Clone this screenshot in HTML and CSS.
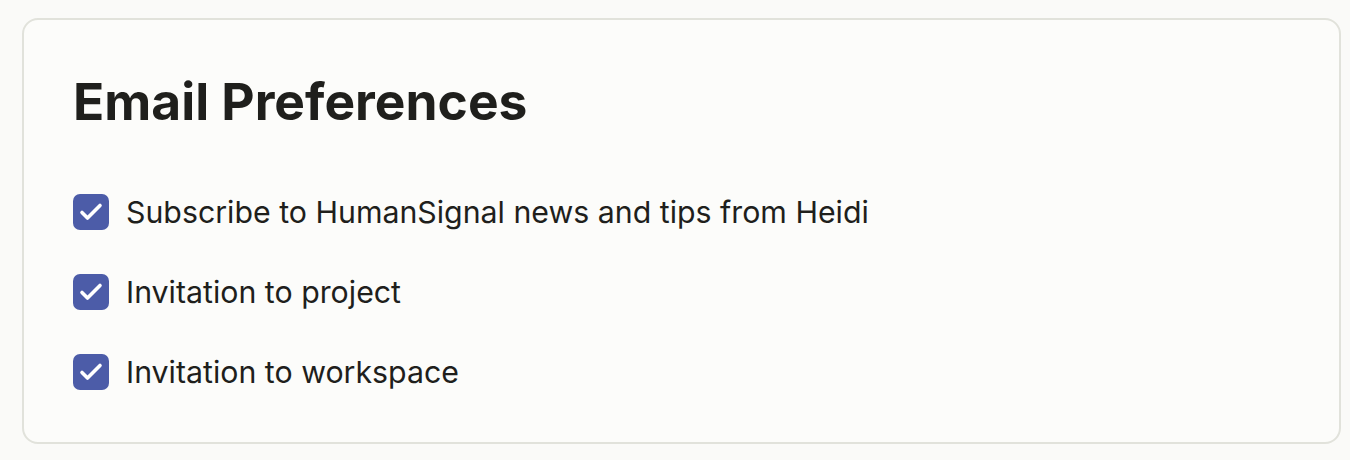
FILE: index.html
```html
<!DOCTYPE html>
<html lang="en">
<head>
<meta charset="utf-8">
<link rel="stylesheet" href="styles.css">
<title>Email Preferences</title>
</head>
<body>
<section class="card">
  <h1 class="title">Email Preferences</h1>
  <div class="options">
    <label class="option">
      <span class="box"><svg viewBox="0 0 36 36" width="36" height="36"><path d="M9 18.5l5.5 5.5L27 11.5" fill="none" stroke="#fff" stroke-width="3.6" stroke-linecap="round" stroke-linejoin="round"/></svg></span>
      <span class="label">Subscribe to HumanSignal news and tips from Heidi</span>
    </label>
    <label class="option">
      <span class="box"><svg viewBox="0 0 36 36" width="36" height="36"><path d="M9 18.5l5.5 5.5L27 11.5" fill="none" stroke="#fff" stroke-width="3.6" stroke-linecap="round" stroke-linejoin="round"/></svg></span>
      <span class="label">Invitation to project</span>
    </label>
    <label class="option">
      <span class="box"><svg viewBox="0 0 36 36" width="36" height="36"><path d="M9 18.5l5.5 5.5L27 11.5" fill="none" stroke="#fff" stroke-width="3.6" stroke-linecap="round" stroke-linejoin="round"/></svg></span>
      <span class="label">Invitation to workspace</span>
    </label>
  </div>
</section>
</body>
</html>
```
FILE: styles.css
```css
html, body {
  margin: 0;
  background: #fafaf8;
}
body {
  padding: 18px 9px 16px 22px;
  font-family: Inter, "Noto Sans", sans-serif;
  color: #1f1f1c;
}
.card {
  box-sizing: border-box;
  height: 426px;
  border: 2px solid #e1e2db;
  border-radius: 16px;
  background: #fcfcfa;
  padding: 51px 48px 0 49px;
}
.title {
  margin: 0;
  font-size: 51.5px;
  line-height: 60px;
  font-weight: 700;
}
.options {
  margin-top: 63px;
  display: flex;
  flex-direction: column;
  gap: 44px;
}
.option {
  display: flex;
  align-items: center;
  gap: 17px;
  height: 36px;
}
.box {
  width: 36px;
  height: 36px;
  border-radius: 7px;
  background: #4c5ca8;
  display: flex;
  align-items: center;
  justify-content: center;
  flex: none;
}
.label {
  font-size: 30.3px;
  line-height: 36px;
}
```
